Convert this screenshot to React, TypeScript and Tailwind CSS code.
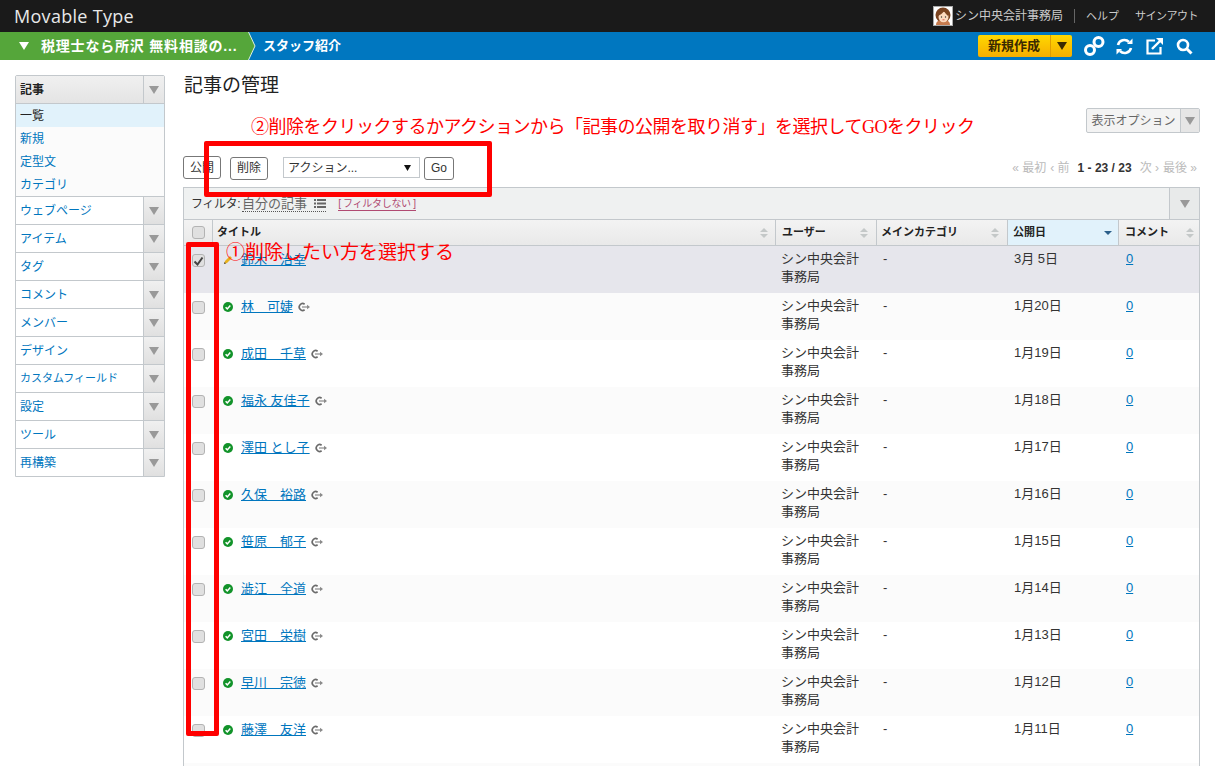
const JP = "font-['Liberation_Sans','Noto_Sans_CJK_JP',sans-serif]";

const rows = [
  { name: "鈴木　治幸", date: "3月 5日", draft: true },
  { name: "林　可婕", date: "1月20日" },
  { name: "成田　千草", date: "1月19日" },
  { name: "福永 友佳子", date: "1月18日" },
  { name: "澤田 とし子", date: "1月17日" },
  { name: "久保　裕路", date: "1月16日" },
  { name: "笹原　郁子", date: "1月15日" },
  { name: "澁江　全道", date: "1月14日" },
  { name: "宮田　栄樹", date: "1月13日" },
  { name: "早川　宗徳", date: "1月12日" },
  { name: "藤澤　友洋", date: "1月11日" },
];

const sections = ["ウェブページ", "アイテム", "タグ", "コメント", "メンバー", "デザイン", "カスタムフィールド", "設定", "ツール", "再構築"];

function Tri({ className }: { className?: string }) {
  return (
    <svg width="10" height="8" viewBox="0 0 10 8" className={className}>
      <path d="M0 0h10L5 8z" fill="currentColor" />
    </svg>
  );
}

function Sort({ active }: { active?: boolean }) {
  if (active) {
    return (
      <svg width="8" height="4" viewBox="0 0 8 4">
        <path d="M0 0h8L4 4z" fill="#2b5f8a" />
      </svg>
    );
  }
  return (
    <svg width="8" height="10" viewBox="0 0 8 10">
      <path d="M4 0l4 4H0zM4 10L0 6h8z" fill="#c4c8c8" />
    </svg>
  );
}

function Check() {
  return (
    <svg width="10" height="10" viewBox="0 0 10 10" className="shrink-0">
      <circle cx="5" cy="5" r="5" fill="#12932a" />
      <path d="M2.6 5.2l1.7 1.7 3-3.4" fill="none" stroke="#fff" strokeWidth="1.5" />
    </svg>
  );
}

function Pencil() {
  return (
    <svg width="10" height="10" viewBox="0 0 10 10" className="shrink-0">
      <path d="M1 9l1-3 5-5 2 2-5 5z" fill="#e8b21c" />
      <path d="M1 9l.6-2 1.4 1.4z" fill="#444" />
    </svg>
  );
}

function ViewIcon() {
  return (
    <svg width="13" height="10" viewBox="0 0 13 10" className="shrink-0">
      <path d="M7.6 2.2A3.4 3.4 0 1 0 7.6 7.8" fill="none" stroke="#6b6b6b" strokeWidth="1.7" />
      <path d="M5 5h5.5" stroke="#8a8a8a" strokeWidth="1.2" />
      <path d="M10 2.8L13 5l-3 2.2z" fill="#8a8a8a" />
    </svg>
  );
}

function Avatar() {
  return (
    <div className="w-5 h-5 border border-[#aaa] bg-white flex items-center justify-center">
      <svg width="18" height="18" viewBox="0 0 18 18">
        <circle cx="9" cy="8" r="7.5" fill="#7a4320" />
        <path d="M2 18c0-4 3-5 7-5s7 1 7 5z" fill="#c77b4e" />
        <ellipse cx="9.5" cy="10" rx="5" ry="5.2" fill="#fbd9bd" />
        <path d="M4 9c2-1 5-3 6-5 1 2 3 4 4 5V5L9 3 4 5z" fill="#7a4320" />
        <circle cx="7.5" cy="10" r=".7" fill="#333" />
        <circle cx="11.5" cy="10" r=".7" fill="#333" />
        <path d="M8.5 12.8h2" stroke="#d9534f" strokeWidth=".9" />
      </svg>
    </div>
  );
}

function Box({ checked }: { checked?: boolean }) {
  return (
    <span className="w-[13px] h-[13px] rounded-[3px] border border-[#b3b3b3] bg-[#e0e0e0] flex items-center justify-center">
      {checked && (
        <svg width="11" height="10" viewBox="0 0 11 10">
          <path d="M1.5 5.5l3 3 5-7" fill="none" stroke="#444" strokeWidth="2" />
        </svg>
      )}
    </span>
  );
}

function SmallBtn({ children }: { children: string }) {
  return (
    <button className="h-[23px] px-1.5 rounded-[3px] border border-[#777] bg-white text-xs text-[#333]">
      {children}
    </button>
  );
}

function Sidebar() {
  return (
    <aside className="w-[150px] shrink-0 border border-[#c3c8cc] rounded-t-[2px] text-xs self-start">
      <div className="flex h-[28px] bg-gradient-to-b from-[#f0f0f0] to-[#e4e4e4] border-b border-[#c3c8cc]">
        <div className="flex-1 pl-1 flex items-center font-bold text-[#222]">記事</div>
        <div className="w-[21px] border-l border-[#c3c8cc] flex items-center justify-center text-[#999]">
          <Tri />
        </div>
      </div>
      <div className="bg-[#fbfbfb]">
        <div className="h-[23px] pl-1 flex items-center bg-[#e1f2fb] text-[#222]">一覧</div>
        <div className="h-[23px] pl-1 flex items-center text-[#0076be]">新規</div>
        <div className="h-[23px] pl-1 flex items-center text-[#0076be]">定型文</div>
        <div className="h-[23px] pl-1 flex items-center text-[#0076be]">カテゴリ</div>
      </div>
      {sections.map((s) => (
        <div key={s} className="flex h-[28px] border-t border-[#c3c8cc] bg-white">
          <div className={`flex-1 pl-1 flex items-center text-[#0076be] ${s === "カスタムフィールド" ? "text-[11px]" : ""}`}>{s}</div>
          <div className="w-[21px] border-l border-[#c3c8cc] bg-gradient-to-b from-[#f0f0f0] to-[#e0e0e0] flex items-center justify-center text-[#999]">
            <Tri />
          </div>
        </div>
      ))}
    </aside>
  );
}

function ListTable() {
  return (
    <div className="border-x border-t border-[#c3c8cc] bg-white">
      <div className="flex h-[32px] bg-[#eff1f1] border-b border-[#c3c8cc]">
        <div className="flex-1 flex items-center pl-[7px] text-[13px] text-[#333]">
          <span className="text-xs tracking-[-0.4px]">フィルタ:</span>
          <span className="ml-[2px] text-[#666] border-b border-dotted border-[#555] flex items-center gap-[7px] leading-[15px]">
            自分の記事
            <svg width="12" height="9" viewBox="0 0 12 9">
              <path d="M0 0h2v2H0zM3 0h9v2H3zM0 3.5h2v2H0zM3 3.5h9v2H3zM0 7h2v2H0zM3 7h9v2H3z" fill="#666" />
            </svg>
          </span>
          <span className="ml-3 text-[10px] tracking-[-0.3px] text-[#b04a72] border-b border-[#b04a72] leading-[13px]">[ フィルタしない ]</span>
        </div>
        <div className="w-[30px] border-l border-[#c3c8cc] bg-[#e8eaea] flex items-center justify-center text-[#999]">
          <Tri />
        </div>
      </div>
      <div className="flex h-[26px] bg-gradient-to-b from-[#f3f3f3] to-[#e9e9e9] border-b border-[#c3c8cc] text-[11px] font-bold text-[#222]">
        <div className="w-[29px] border-r border-[#c3c8cc] flex items-center justify-center">
          <Box />
        </div>
        <div className="w-[563px] border-r border-[#c3c8cc] flex items-center justify-between pl-1 pr-[7px]">
          タイトル <Sort />
        </div>
        <div className="w-[101px] border-r border-[#c3c8cc] flex items-center justify-between pl-[6px] pr-[8px]">
          ユーザー <Sort />
        </div>
        <div className="w-[131px] border-r border-[#c3c8cc] flex items-center justify-between pl-1 pr-[8px]">
          メインカテゴリ <Sort />
        </div>
        <div className="w-[111px] border-r border-[#c3c8cc] bg-[#e1f2fb] flex items-center justify-between pl-[5px] pr-[6px]">
          公開日 <Sort active />
        </div>
        <div className="flex-1 flex items-center justify-between pl-1.5 pr-[5px]">
          コメント <Sort />
        </div>
      </div>
      {rows.map((r, i) => (
        <div
          key={r.name}
          className={`flex h-[47px] text-[13px] leading-[18px] text-[#333] ${r.draft ? "bg-[#e6e6ec]" : i % 2 === 1 ? "bg-[#fbfbfb]" : "bg-white"}`}
        >
          <div className="w-[29px] flex justify-center pt-[8px]">
            <Box checked={r.draft} />
          </div>
          <div className="w-[563px] flex items-center self-start gap-2 pl-[10px] pt-[5px]">
            {r.draft ? <Pencil /> : <Check />}
            <span className="flex items-center gap-1">
              <span className="text-[#0076be] underline">{r.name}</span>
              {!r.draft && <ViewIcon />}
            </span>
          </div>
          <div className="w-[101px] pl-[5px] pt-[4px]">シン中央会計<br />事務局</div>
          <div className="w-[131px] pl-[6px] pt-[4px]">-</div>
          <div className="w-[111px] pl-[6px] pt-[4px]">{r.date}</div>
          <div className="flex-1 pl-[7px] pt-[4px]">
            <span className="text-[#0076be] underline">0</span>
          </div>
        </div>
      ))}
      <div className="h-[47px] bg-[#fbfbfb]" />
    </div>
  );
}

export default function App() {
  return (
    <div className={`relative h-[766px] w-[1215px] overflow-hidden bg-white ${JP}`}>
      <header className="h-[32px] bg-[#1a1a1a] flex items-center justify-between pl-[14px] pr-[17px]">
        <span className="font-['Open_Sans',sans-serif] text-[18px] tracking-[0.3px] text-[#e8e8e8]">Movable Type</span>
        <div className="flex items-center text-xs text-[#ccc]">
          <Avatar />
          <span className="ml-[2px]">シン中央会計事務局</span>
          <span className="mx-[11px] h-[14px] w-px bg-[#666]" />
          <span className="text-[11px]">ヘルプ</span>
          <span className="ml-[16px] text-[11px] tracking-[-0.5px]">サインアウト</span>
        </div>
      </header>

      <div className="h-[28px] bg-[#0077c0] flex items-center text-[13px] font-bold text-white">
        <div className="relative h-full w-[248px] bg-[#55a63a] flex items-center pl-[19px]">
          <Tri className="text-white" />
          <span className="ml-[12px] text-[14px] tracking-[0.8px] whitespace-nowrap">税理士なら所沢 無料相談の...</span>
          <svg width="8" height="28" viewBox="0 0 8 28" className="absolute left-full top-0">
            <path d="M0 0h0.5L7 14 .5 28H0z" fill="#55a63a" />
            <path d="M.5 0L7 14 .5 28" fill="none" stroke="#dfeee0" />
          </svg>
        </div>
        <span className="ml-[15px]">スタッフ紹介</span>
        <div className="ml-auto flex items-center pr-[22px]">
          <div className="flex h-[22px] w-[94px] rounded-[2px] bg-gradient-to-b from-[#ffd800] to-[#f5ae00] text-[#3a2a00]">
            <span className="flex-1 flex items-center justify-center">新規作成</span>
            <span className="w-[22px] border-l border-[#e09c00] flex items-center justify-center text-[#3a2a00]">
              <Tri />
            </span>
          </div>
          <svg width="21" height="20" viewBox="0 0 21 20" className="ml-[12px]">
            <circle cx="14.5" cy="6" r="4.5" fill="none" stroke="#fff" strokeWidth="3" />
            <circle cx="6" cy="14" r="4.5" fill="none" stroke="#fff" strokeWidth="3" />
          </svg>
          <svg width="17" height="17" viewBox="0 0 17 17" className="ml-[11px]">
            <path d="M2 7a6.5 6.5 0 0 1 11-3M15 10a6.5 6.5 0 0 1-11 3" fill="none" stroke="#fff" strokeWidth="2.6" />
            <path d="M11 6h5.5V.5zM6 11H.5v5.5z" fill="#fff" />
          </svg>
          <svg width="17" height="17" viewBox="0 0 17 17" className="ml-[13px]">
            <path d="M9 2.5H1.5v13h13V9" fill="none" stroke="#fff" strokeWidth="2.2" />
            <path d="M6 11l8-8" stroke="#fff" strokeWidth="2.4" />
            <path d="M10 0h7v7z" fill="#fff" />
          </svg>
          <svg width="17" height="17" viewBox="0 0 17 17" className="ml-[13px]">
            <circle cx="7" cy="7" r="5" fill="none" stroke="#fff" strokeWidth="2.6" />
            <path d="M10.5 10.5l5 5" stroke="#fff" strokeWidth="3" />
          </svg>
        </div>
      </div>

      <div className="flex pl-[15px] pr-[15px] pt-[15px] gap-[18px]">
        <Sidebar />
        <main className="flex-1 min-w-0">
          <h1 className="ml-px text-[19px] leading-[22px] text-[#222]">記事の管理</h1>
          <div className="relative mt-[11px] h-[26px] flex justify-end">
            <p className="absolute left-[68px] top-[8px] text-[18px] leading-[22px] tracking-[-0.5px] text-[#f00] font-['Liberation_Serif','Noto_Sans_CJK_JP',serif] whitespace-nowrap">
              ②削除をクリックするかアクションから「記事の公開を取り消す」を選択してGOをクリック
            </p>
            <div className="flex h-[25px] w-[114px] rounded-[2px] border border-[#c3c8cc] bg-[#f3f3f3] text-xs text-[#666]">
              <span className="flex-1 flex items-center justify-center">表示オプション</span>
              <span className="w-[19px] border-l border-[#c3c8cc] bg-[#e6e6e6] flex items-center justify-center text-[#999]">
                <Tri />
              </span>
            </div>
          </div>
          <div className="mt-[22px] h-[23px] flex items-center">
            <SmallBtn>公開</SmallBtn>
            <span className="ml-[9px]"><SmallBtn>削除</SmallBtn></span>
            <div className="ml-[15px] w-[137px] h-[21px] border border-[#c3c8cc] bg-white flex items-center justify-between pl-1 pr-[8px] text-xs text-[#333]">
              アクション...
              <svg width="7" height="6" viewBox="0 0 7 6"><path d="M0 0h7L3.5 6z" fill="#111" /></svg>
            </div>
            <span className="ml-1"><SmallBtn>Go</SmallBtn></span>
            <div className="ml-auto flex items-center gap-1 text-xs text-[#bbb] pr-[3px]">
              <span>« 最初</span>
              <span>‹ 前</span>
              <span className="mx-1 font-bold text-[#333]">1 - 23 / 23</span>
              <span>次 ›</span>
              <span>最後 »</span>
            </div>
          </div>
          <div className="mt-[8px]">
            <ListTable />
          </div>
        </main>
      </div>

      {/* red annotations pasted over the screenshot */}
      <div className="absolute left-[204px] top-[141px] w-[288px] h-[56px] border-[5px] border-[#f00] rounded-[2px]" />
      <div className="absolute left-[186px] top-[242px] w-[33px] h-[494px] border-[5px] border-[#f00] rounded-[2px]" />
      <p className="absolute left-[226px] top-[242px] text-[19px] leading-[22px] text-[#f00] whitespace-nowrap">
        ①削除したい方を選択する
      </p>
    </div>
  );
}
